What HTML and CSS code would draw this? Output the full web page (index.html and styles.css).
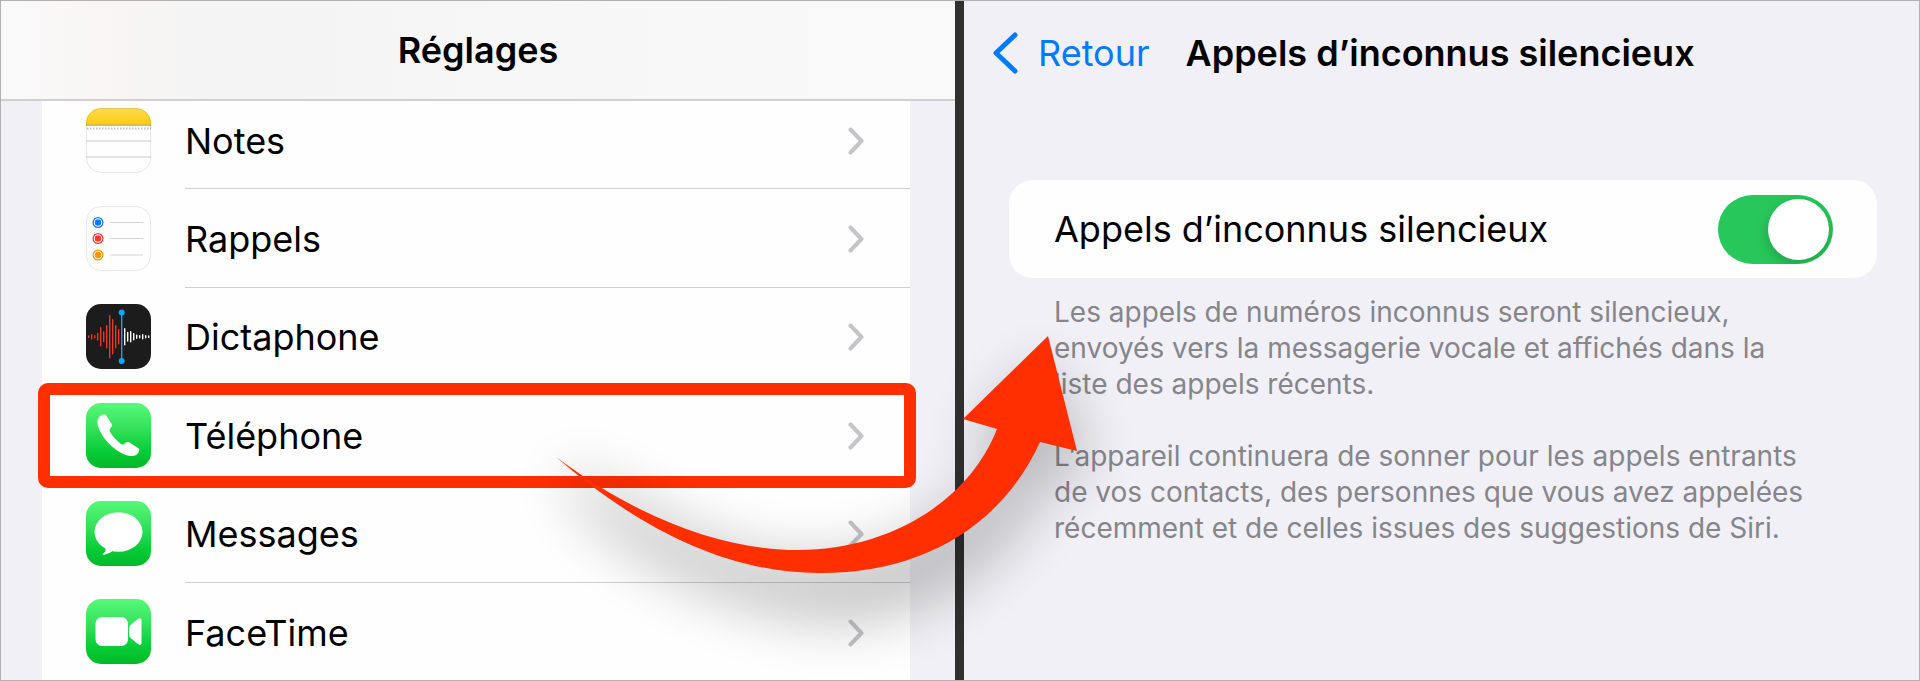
FILE: index.html
```html
<!DOCTYPE html>
<html lang="fr">
<head>
    <meta charset="UTF-8">
    <meta name="viewport" content="width=device-width, initial-scale=1.0">
    <title>Réglages</title>
    <link rel="stylesheet" href="styles.css">
</head>
<body>

<div class="page">
    <section class="settings">
        <header class="settings-header">
            <h1>Réglages</h1>
        </header>
        <nav class="list">
            <a class="row" href="#notes">
                <svg class="app-icon" viewBox="0 0 65 65">
                    <defs>
                        <linearGradient id="yellow" x1="0" y1="0" x2="0" y2="1">
                            <stop offset="0" stop-color="#ffdb55"/>
                            <stop offset="1" stop-color="#fecb0c"/>
                        </linearGradient>
                        <clipPath id="iconShape"><rect width="65" height="65" rx="15"/></clipPath>
                    </defs>
                    <g clip-path="url(#iconShape)">
                        <rect width="65" height="65" fill="#fefefe"/>
                        <rect width="65" height="17" fill="url(#yellow)"/>
                        <rect y="16.5" width="65" height="1.3" fill="#b5ab8c"/>
                        <path d="M1 20.5H65" stroke="#c2c2c2" stroke-width="2" stroke-dasharray="1.5 1.5"/>
                        <path d="M0 33H65M0 49H65" stroke="#c9c9c9" stroke-width="1.2"/>
                    </g>
                    <rect x=".5" y=".5" width="64" height="64" rx="14.5" fill="none" stroke="#000" stroke-opacity=".09"/>
                </svg>
                <span class="row-body">Notes
                    <svg class="chevron" viewBox="0 0 16 28"><path d="M2.5 2.5L13.5 14L2.5 25.5"/></svg>
                </span>
            </a>
            <a class="row" href="#rappels">
                <svg class="app-icon" viewBox="0 0 65 65">
                    <rect x=".5" y=".5" width="64" height="64" rx="14.5" fill="#fefefe" stroke="#e8e8e8"/>
                    <g fill="none" stroke-width="1.2">
                        <circle cx="12" cy="16.5" r="4.9" stroke="#0a7aff"/>
                        <circle cx="12" cy="32.5" r="4.9" stroke="#ff3b30"/>
                        <circle cx="12" cy="49" r="4.9" stroke="#ff9500"/>
                    </g>
                    <circle cx="12" cy="16.5" r="3.2" fill="#0a7aff"/>
                    <circle cx="12" cy="32.5" r="3.2" fill="#ff3b30"/>
                    <circle cx="12" cy="49" r="3.2" fill="#ff9500"/>
                    <path d="M24 16.5H57M24 32.5H57M24 49H57" stroke="#d4d4d4" stroke-width="1.2"/>
                </svg>
                <span class="row-body">Rappels
                    <svg class="chevron" viewBox="0 0 16 28"><path d="M2.5 2.5L13.5 14L2.5 25.5"/></svg>
                </span>
            </a>
            <a class="row" href="#dictaphone">
                <svg class="app-icon" viewBox="0 0 65 65">
                    <rect width="65" height="65" rx="15" fill="#1c1c1d"/>
                    <path d="M2.7 32v1.4M5.7 30.7v4M8.7 31.7v2M11.7 29.4v6.6M14.7 23.7v18M17.7 28v9.4M20.7 21.7v22M23.7 11.7v42M26.7 15.7v34M29.7 21.7v22M32.7 25.7v14" stroke="#e8392f" stroke-width="1.4" stroke-linecap="round"/>
                    <path d="M38.7 24.7v16M41.7 28.4v8.6M44.7 27.7v10M47.7 29.7v6M50.7 31.2v3M53.7 31.7v2M56.7 30.7v4M59.7 31.7v2M62.7 32v1.4" stroke="#fff" stroke-width="1.4" stroke-linecap="round"/>
                    <path d="M35.7 8.5V57" stroke="#0fa5ff" stroke-width="1.4"/>
                    <circle cx="35.7" cy="8.5" r="3" fill="#0fa5ff"/>
                    <circle cx="35.7" cy="57" r="3" fill="#0fa5ff"/>
                </svg>
                <span class="row-body">Dictaphone
                    <svg class="chevron" viewBox="0 0 16 28"><path d="M2.5 2.5L13.5 14L2.5 25.5"/></svg>
                </span>
            </a>
            <a class="row row-highlight" href="#telephone">
                <svg class="app-icon" viewBox="0 0 65 65">
                    <defs>
                        <linearGradient id="green" x1="0" y1="0" x2="0" y2="1">
                            <stop offset="0" stop-color="#56fa78"/>
                            <stop offset=".4" stop-color="#34e05a"/>
                            <stop offset=".75" stop-color="#06cc36"/>
                            <stop offset="1" stop-color="#03b827"/>
                        </linearGradient>
                    </defs>
                    <rect width="65" height="65" rx="15" fill="url(#green)"/>
                    <path d="M12 16C13 13 16 11.5 18.5 11.2C19.5 11.2 20 12 20.5 13L25.5 20.5C26.5 22 26 23 25 24.5C23.5 26.5 23 27.5 24 29C27 34 31 38 35 41C36.5 42 37.5 41.5 39 40.3C41 38.7 42.5 38.7 44 39.7L52 45C53.5 46 53.8 47 53 48.5C51.5 52 48.5 53.5 44 53C30 51 13 33 11.5 20C11.3 18.5 11.5 17 12 16Z" fill="#fff"/>
                </svg>
                <span class="row-body">Téléphone
                    <svg class="chevron" viewBox="0 0 16 28"><path d="M2.5 2.5L13.5 14L2.5 25.5"/></svg>
                </span>
            </a>
            <a class="row" href="#messages">
                <svg class="app-icon" viewBox="0 0 65 65">
                    <rect width="65" height="65" rx="15" fill="url(#green)"/>
                    <ellipse cx="32.5" cy="31" rx="24" ry="19.8" fill="#fff"/>
                    <path d="M18 45C20.5 48 20 50.5 17 53C16.5 53.7 17 54 18 53.8C22 53 25 51.5 27 49.5Z" fill="#fff"/>
                </svg>
                <span class="row-body">Messages
                    <svg class="chevron" viewBox="0 0 16 28"><path d="M2.5 2.5L13.5 14L2.5 25.5"/></svg>
                </span>
            </a>
            <a class="row" href="#facetime">
                <svg class="app-icon" viewBox="0 0 65 65">
                    <rect width="65" height="65" rx="15" fill="url(#green)"/>
                    <rect x="9.5" y="18" width="32.5" height="29" rx="6.5" fill="#fff"/>
                    <path d="M43.3 29C43.3 27.5 43.6 27 44.5 26L52 20C54 18.5 55.5 19 55.5 21.5V43.5C55.5 46 54 46.5 52 45L44.5 39C43.6 38 43.3 37.5 43.3 36Z" fill="#fff"/>
                </svg>
                <span class="row-body">FaceTime
                    <svg class="chevron" viewBox="0 0 16 28"><path d="M2.5 2.5L13.5 14L2.5 25.5"/></svg>
                </span>
            </a>
        </nav>
    </section>

    <section class="detail">
        <header class="detail-header">
            <a class="back" href="#reglages">
                <svg class="back-icon" viewBox="0 0 25 42"><path d="M22 3L3 21L22 39"/></svg>
                Retour
            </a>
            <h2>Appels d’inconnus silencieux</h2>
        </header>
        <div class="card">
            <label for="silence">Appels d’inconnus silencieux</label>
            <input class="switch" type="checkbox" role="switch" id="silence" checked>
        </div>
        <div class="help">
            <p>Les appels de numéros inconnus seront silencieux,<br>
            envoyés vers la messagerie vocale et affichés dans la<br>
            liste des appels récents.</p>
            <p>L’appareil continuera de sonner pour les appels entrants<br>
            de vos contacts, des personnes que vous avez appelées<br>
            récemment et de celles issues des suggestions de Siri.</p>
        </div>
    </section>

    <!-- Flèche entre les deux écrans -->
    <svg class="arrow" viewBox="0 0 1920 681" aria-hidden="true">
        <path class="arrow-shadow" d="M568 468C650 510 720 562 810 562C895 562 980 510 1005 455L970 440L1048 360L1090 475L1050 475C1005 565 925 620 845 620C740 620 620 560 568 488Z"/>
        <path d="M556 457C640 520 725 550 798 550C885 550 967 505 997 429L963 419L1048 336L1077 451L1040 442C1000 530 917 573 822 573C730 574 640 530 556 457Z"/>
    </svg>
</div>

</body>
</html>
```
FILE: styles.css
```css
* {
    box-sizing: border-box;
}

body {
    margin: 0;
    font-family: Inter, "Liberation Sans", sans-serif;
    font-size: 36px;
    color: #000;
    background-color: #f1f0f6;
}

h1, h2, p {
    margin: 0;
}

h1, h2 {
    font-size: 36px;
    font-weight: 600;
}

a {
    color: inherit;
    text-decoration: none;
}

.page {
    position: relative;
    display: grid;
    grid-template-columns: 954fr 964fr;
    height: 100vh;
    overflow: hidden;
    border: 1px solid #b4b0b2;
}

/* Liste des réglages */
.settings {
    display: flex;
    flex-direction: column;
    min-height: 0;
}
.settings-header {
    position: relative;
    z-index: 1;
    display: flex;
    align-items: center;
    justify-content: center;
    height: 100px;
    flex-shrink: 0;
    border-bottom: 2px solid #d0d0d1;
    background: linear-gradient(to right, #fafafa, #f8f5f4 12%, #f4f4f4 22%, #f4f4f4 30%, #f7f7f7 55%, #f9f9f9);
}
.list {
    display: grid;
    grid-auto-rows: 1fr;
    flex: 1;
    margin: -10px 45px -1px 41px;
    background-color: #fefefe;
}
.row {
    position: relative;
    display: flex;
    gap: 34px;
    padding-left: 44px;
}
.app-icon {
    width: 65px;
    height: 65px;
    align-self: center;
}
.row-body {
    display: flex;
    flex: 1;
    align-items: center;
    justify-content: space-between;
    padding-top: 2px;
    padding-right: 46px;
    border-bottom: 1px solid #cfcfd1;
}
.row:last-child .row-body {
    border-bottom: none;
}
.chevron {
    width: 16px;
    height: 28px;
    fill: none;
    stroke: #c4c4c6;
    stroke-width: 4;
    stroke-linecap: round;
    stroke-linejoin: round;
}
.row-highlight::after {
    content: "";
    position: absolute;
    inset: -3px -6px -4px -4px;
    border: 12px solid #ff2f00;
    border-radius: 10px;
}

/* Détail */
.detail {
    border-left: 9px solid #303030;
    padding: 0 42px 0 45px;
}
.detail-header {
    display: flex;
    align-items: center;
    gap: 36px;
    height: 103px;
    margin-left: -16px;
    white-space: nowrap;
}
.back {
    display: flex;
    align-items: center;
    gap: 20px;
    color: #007aff;
}
.back-icon {
    width: 25px;
    height: 42px;
    fill: none;
    stroke: #007aff;
    stroke-width: 5;
    stroke-linecap: round;
    stroke-linejoin: round;
}
.card {
    display: flex;
    align-items: center;
    justify-content: space-between;
    height: 98px;
    margin-top: 76px;
    padding: 0 44px 0 45px;
    border-radius: 24px;
    background-color: #fefefe;
}
.switch {
    appearance: none;
    display: flex;
    justify-content: flex-end;
    width: 115px;
    height: 69px;
    margin: 0;
    padding: 4px;
    overflow: hidden;
    border-radius: 35px;
    background-color: #28c75b;
}
.switch::before {
    content: "";
    width: 61px;
    height: 61px;
    border-radius: 50%;
    background-color: #fff;
    box-shadow: 0 5px 14px rgba(0, 0, 0, 0.2);
}
.switch:not(:checked) {
    justify-content: flex-start;
    background-color: #e9e9ea;
}
.help {
    padding: 16px 0 0 45px;
    font-size: 28px;
    line-height: 36px;
    color: #86858a;
    white-space: nowrap;
}
.help p + p {
    margin-top: 36px;
}

.arrow {
    position: absolute;
    top: -1px;
    left: -1px;
    width: calc(100% + 2px);
    pointer-events: none;
    fill: #ff2f00;
}
.arrow-shadow {
    fill: #000;
    opacity: 0.24;
    filter: blur(29px);
}
```
